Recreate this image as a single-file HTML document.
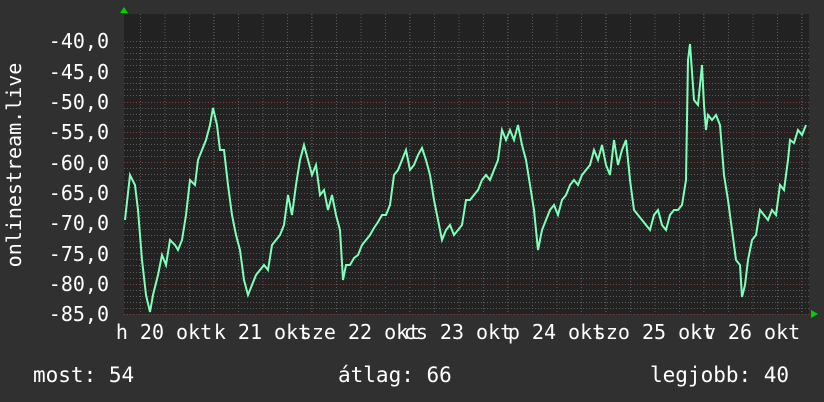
<!DOCTYPE html>
<html><head><meta charset="utf-8"><style>
html,body{margin:0;padding:0;background:#303030;}
svg{display:block}
text{font-family:"DejaVu Sans Mono","Liberation Mono",monospace;fill:#fff;font-size:20px}
text.lg{font-size:21px}
</style></head><body>
<svg width="824" height="402" viewBox="0 0 824 402" xmlns="http://www.w3.org/2000/svg">
<rect width="824" height="402" fill="#303030"/>
<rect x="124" y="14" width="685" height="300" fill="#222222"/>
<g stroke="#5a5a5a" stroke-width="1" stroke-dasharray="1,2" id="minor"></g>
<g id="grid"></g>
<polyline fill="none" stroke="#7fffb8" stroke-width="2" stroke-linejoin="miter" points="125,220 130,175 135,185 138,210 142,260 146,295 150,312 153,295 158,275 162,255 166,265 170,240 175,245 178,250 182,240 186,215 190,180 195,185 198,160 202,150 206,140 210,125 213,108 217,125 220,150 224,150 228,185 232,215 236,235 240,250 244,280 248,295 252,285 256,275 260,270 264,265 268,270 272,245 276,240 280,235 284,225 288,195 292,215 296,185 300,160 304,145 308,160 312,175 316,165 320,195 324,190 328,210 332,195 336,215 340,230 343,280 346,265 350,265 354,258 358,255 362,245 366,240 370,235 374,228 378,222 382,215 386,215 390,205 394,175 398,170 402,160 406,150 410,170 414,165 418,155 422,148 426,160 430,175 434,200 438,220 442,240 446,230 450,225 454,235 458,230 462,225 466,200 470,200 474,195 478,190 482,180 486,175 490,180 494,170 498,160 502,130 506,140 510,130 514,140 518,125 522,145 526,160 530,185 534,210 538,250 542,230 546,220 550,210 554,205 558,215 562,200 566,195 570,185 574,180 578,185 582,175 586,170 590,165 594,150 598,160 602,145 606,165 610,175 614,140 618,165 622,150 626,140 630,180 634,210 638,215 642,220 646,225 650,230 654,215 658,210 662,225 666,230 670,215 674,210 678,210 682,205 686,180 688,60 690,44 694,100 698,105 702,65 704,105 706,130 708,115 712,120 716,115 720,125 724,175 728,200 732,230 736,260 740,265 742,297 745,285 748,260 752,240 756,235 760,210 764,215 768,220 772,210 776,215 780,185 784,190 788,160 790,140 794,143 798,130 802,135 806,125"/>
<polygon points="120,13 128,13 124,7" fill="#00d000"/>
<polygon points="811,310 811,318 818,314" fill="#00d000"/>
<g text-anchor="end">
<text x="109" y="48">-40,0</text><text x="109" y="79">-45,0</text><text x="109" y="109">-50,0</text>
<text x="109" y="139">-55,0</text><text x="109" y="170">-60,0</text><text x="109" y="200">-65,0</text>
<text x="109" y="230">-70,0</text><text x="109" y="261">-75,0</text><text x="109" y="291">-80,0</text>
<text x="109" y="321">-85,0</text>
</g>
<text transform="translate(21,165) rotate(-90)" text-anchor="middle">onlinestream.live</text>
<g text-anchor="middle">
<text x="164" y="339">h 20 okt</text><text x="262" y="339">k 21 okt</text><text x="360" y="339">sze 22 okt</text>
<text x="458" y="339">cs 23 okt</text><text x="556" y="339">p 24 okt</text><text x="654" y="339">szo 25 okt</text>
<text x="752" y="339">v 26 okt</text>
</g>
<text class="lg" x="33" y="382">most: 54</text>
<text class="lg" x="338" y="382">átlag: 66</text>
<text class="lg" x="650" y="382">legjobb: 40</text>
<script>
var ns="http://www.w3.org/2000/svg",m=document.getElementById("minor"),g=document.getElementById("grid");
function L(p,x1,y1,x2,y2,c){var l=document.createElementNS(ns,"line");l.setAttribute("x1",x1);l.setAttribute("y1",y1);l.setAttribute("x2",x2);l.setAttribute("y2",y2);l.setAttribute("stroke",c);l.setAttribute("stroke-dasharray","1,2");p.appendChild(l);}
for(var v=0;v<=45;v++){var y=Math.round(314-v*6.07)+0.5;if(y<14)break;L(m,124,y,809,y,"#5a5a5a");}
for(var x=140.5;x<809;x+=24.5){L(m,x,14,x,314,"#5a5a5a");}
for(var k=0;k<10;k++){var y=Math.round(314-k*30.35)+0.5;L(g,124,y,809,y,"#8a3a3a");}
for(var x=213.5;x<809;x+=98){L(g,x,14,x,314,"#8a3a3a");}
</script>
</svg>
</body></html>
